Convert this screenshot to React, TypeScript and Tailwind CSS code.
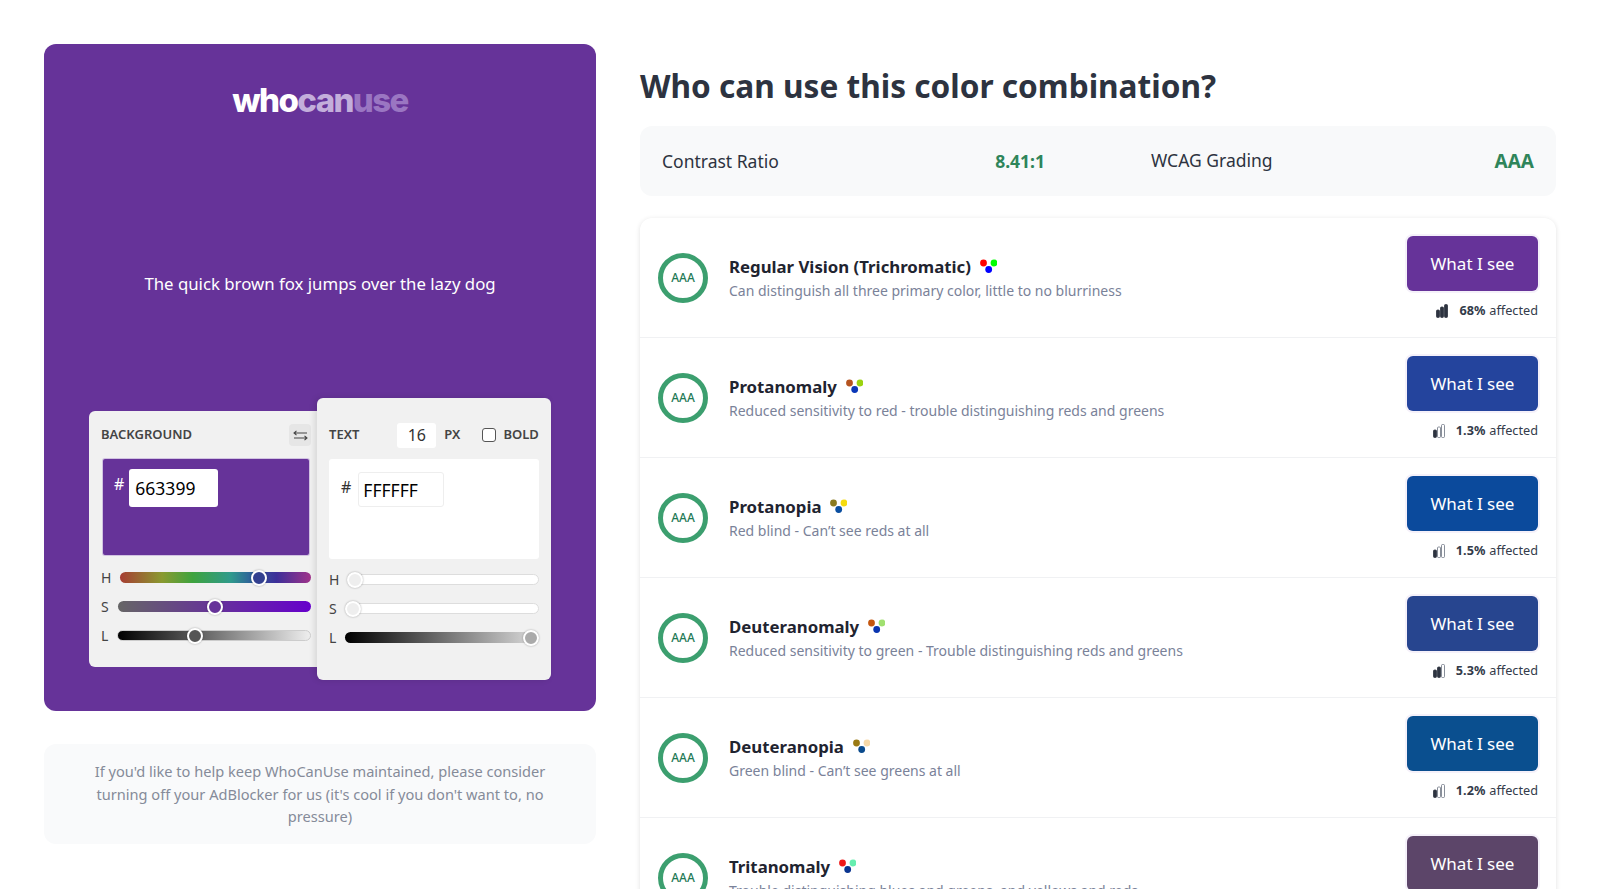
import React from "react";

const rows = [
  { name: "Regular Vision (Trichromatic)", desc: "Can distinguish all three primary color, little to no blurriness", pct: "68%", level: 3, btn: "bg-[#663399]", dots: ["#ff0000", "#00ff00", "#0000ff"] },
  { name: "Protanomaly", desc: "Reduced sensitivity to red - trouble distinguishing reds and greens", pct: "1.3%", level: 1, btn: "bg-[#24449d]", dots: ["#b5531f", "#9bd30f", "#0a37b8"] },
  { name: "Protanopia", desc: "Red blind - Can’t see reds at all", pct: "1.5%", level: 1, btn: "bg-[#0b4a9c]", dots: ["#8a7a20", "#f5dc10", "#0a4ea0"] },
  { name: "Deuteranomaly", desc: "Reduced sensitivity to green - Trouble distinguishing reds and greens", pct: "5.3%", level: 2, btn: "bg-[#27458f]", dots: ["#c4560f", "#a0e070", "#0a35b0"] },
  { name: "Deuteranopia", desc: "Green blind - Can’t see greens at all", pct: "1.2%", level: 1, btn: "bg-[#0a4f8f]", dots: ["#9a7a14", "#f7d9a8", "#0a4a8c"] },
  { name: "Tritanomaly", desc: "Trouble distinguishing blues and greens, and yellows and reds", pct: "0.01%", level: 1, btn: "bg-[#5c4569]", dots: ["#f01818", "#66eeb0", "#0a3590"] },
];

function Dots({ colors }: { colors: string[] }) {
  return (
    <svg width="17" height="17" viewBox="0 0 17 17" className="ml-[9px] shrink-0">
      <circle cx="3.5" cy="4" r="3.4" fill={colors[0]} />
      <circle cx="14" cy="4" r="3.4" fill={colors[1]} />
      <circle cx="8.7" cy="10.5" r="3.4" fill={colors[2]} />
    </svg>
  );
}

function Bars({ level }: { level: number }) {
  const bars = [
    { x: 0.5, y: 6, h: 7.5 },
    { x: 4.5, y: 3, h: 10.5 },
    { x: 8.5, y: 0.5, h: 13 },
  ];
  return (
    <svg width="13" height="14" viewBox="0 0 13 14" className="mr-2.5 shrink-0">
      {bars.map((b, i) => (
        <rect
          key={i}
          x={b.x}
          y={b.y}
          width="3"
          height={b.h}
          rx="1"
          fill={i < level ? "#2d3340" : "#ffffff"}
          stroke={i < level ? "#2d3340" : "#6b7280"}
          strokeWidth="0.8"
        />
      ))}
    </svg>
  );
}

function Slider({ label, track, thumb, color, border }: { label: string; track: string; thumb: number; color: string; border?: string }) {
  return (
    <div className="flex items-center gap-[9px] h-[11px]">
      <span className="text-[14px] leading-none text-[#444]">{label}</span>
      <div className={`relative flex-1 h-[11px] rounded-full ${border ?? ""}`} style={{ background: track }}>
        <span
          className="absolute top-1/2 -translate-x-1/2 -translate-y-1/2 w-4 h-4 rounded-full border-[2.5px] border-white shadow-[0_0_2px_rgba(0,0,0,0.35)]"
          style={{ left: thumb, background: color }}
        />
      </div>
    </div>
  );
}

export default function App() {
  return (
    <div className="h-screen overflow-hidden bg-white flex gap-[44px] p-[44px] text-[#1f2430] font-['Noto_Sans','Open_Sans',sans-serif]">
      <div className="w-[552px] shrink-0 flex flex-col">
        <div className="h-[667px] rounded-xl bg-[#663399] flex flex-col items-center">
          <div className="mt-[35px] h-[42px] flex items-center text-[33px] leading-none font-extrabold tracking-[-1.6px] font-['Inter',sans-serif]">
            <span className="text-white">who</span>
            <span className="text-[#c3aedb]">can</span>
            <span className="text-[#9a76c2]">use</span>
          </div>
          <p className="mt-[151px] text-[16.8px] leading-6 text-white">The quick brown fox jumps over the lazy dog</p>
          <div className="mt-[102px] flex items-center">
            <div className="w-[228px] h-[256px] rounded-l-md bg-[#f1f1f1] px-3 pt-[13px]">
              <div className="flex items-center justify-between h-[22px]">
                <span className="text-[13px] font-semibold text-[#444]">BACKGROUND</span>
                <button className="w-[22px] h-[22px] -mr-1.5 rounded bg-[#e6e6e6] flex items-center justify-center">
                  <svg width="15" height="11" viewBox="0 0 15 11" fill="none" stroke="#444" strokeWidth="1.1">
                    <path d="M1 3h13M3.5 0.8 1 3l2.5 2.2" />
                    <path d="M14 8H1M11.5 5.8 14 8l-2.5 2.2" />
                  </svg>
                </button>
              </div>
              <div className="mt-3 ml-px mr-[-5px] h-[98px] rounded-[3px] bg-[#663399] border border-white/70 pl-[11px] pt-[10px] flex items-start gap-[5px]">
                <span className="text-white text-[16px] leading-[30px]">#</span>
                <input readOnly value="663399" className="w-[89px] h-[38px] rounded-[3px] bg-white pl-[6px] text-[17.5px] text-black outline-none" />
              </div>
              <div className="mt-4 -mr-[6px] flex flex-col gap-[18px]">
                <Slider label="H" thumb={139} color="#33408f" track="linear-gradient(90deg,#a63d33,#8a9a30 22%,#3ea33e 38%,#2f9a8c 58%,#2f5a9c 70%,#3d2f99 82%,#a0338a)" />
                <Slider label="S" thumb={97} color="#663399" track="linear-gradient(90deg,#666,#663399 50%,#6600cc)" />
                <Slider label="L" thumb={77} color="#555" track="linear-gradient(90deg,#000,#666 45%,#eee)" border="border border-[#ccc]" />
              </div>
            </div>
            <div className="w-[234px] h-[282px] rounded-md bg-[#f1f1f1] px-3 pt-6 shadow-[-2px_0_6px_rgba(0,0,0,0.12)]">
              <div className="flex items-center h-[26px]">
                <span className="text-[13px] font-semibold text-[#444]">TEXT</span>
                <input readOnly value="16" className="ml-[38px] w-[39px] h-[25px] rounded-[3px] bg-white text-center text-[16px] text-[#333] outline-none" />
                <span className="ml-2 text-[13px] font-semibold text-[#444]">PX</span>
                <span className="ml-[22px] w-[14px] h-[14px] rounded-[3px] border border-[#555] bg-white" />
                <span className="ml-[7px] text-[13px] font-semibold text-[#444]">BOLD</span>
              </div>
              <div className="mt-[11px] h-[100px] rounded-[3px] bg-white pl-3 pt-[13px] flex items-start gap-[7px]">
                <span className="text-[#333] text-[16px] leading-[30px]">#</span>
                <input readOnly value="FFFFFF" className="w-[86px] h-[35px] rounded-[3px] bg-white border border-[#eee] pl-1 text-[17.5px] text-black outline-none" />
              </div>
              <div className="mt-[15px] flex flex-col gap-[18px]">
                <Slider label="H" thumb={6} color="#eee" track="#ffffff" border="border border-[#ddd]" />
                <Slider label="S" thumb={6} color="#eee" track="#ffffff" border="border border-[#ddd]" />
                <Slider label="L" thumb={186} color="#aaa" track="linear-gradient(90deg,#000,#ddd)" />
              </div>
            </div>
          </div>
        </div>
        <div className="mt-[33px] h-[100px] rounded-xl bg-[#f9fafb] px-10 flex items-center text-center text-[14.6px] leading-[22.5px] text-[#858b99]">
          If you'd like to help keep WhoCanUse maintained, please consider turning off your AdBlocker for us (it's cool if you don't want to, no pressure)
        </div>
      </div>

      <div className="flex-1 min-w-0">
        <h1 className="mt-[17px] text-[31.6px] leading-[50px] font-bold text-[#2d3340]">Who can use this color combination?</h1>
        <div className="mt-[15px] h-[70px] rounded-xl bg-[#f8f9fa] px-[22px] grid grid-cols-[1fr_1fr] items-center text-[17.5px] text-[#2d3340]">
          <div className="flex justify-between pr-[53px]">
            <span>Contrast Ratio</span>
            <span className="font-bold text-[#2f855a]">8.41:1</span>
          </div>
          <div className="flex justify-between pl-[53px]">
            <span>WCAG Grading</span>
            <span className="font-bold text-[19px] text-[#2f855a]">AAA</span>
          </div>
        </div>
        <div className="mt-[22px] rounded-xl bg-white shadow-[0_1px_5px_rgba(0,0,0,0.12)]">
          {rows.map((r) => (
            <div key={r.name} className="h-[120px] border-b border-[#f0f1f3] px-[18px] flex items-start">
              <div className="mt-[35px] w-[50px] h-[50px] rounded-full border-[5px] border-[#3c9f6f] flex items-center justify-center text-[12px] font-medium text-[#1f7a55]">
                AAA
              </div>
              <div className="ml-[21px] mt-[35px] flex-1">
                <div className="flex items-center h-[28px]">
                  <span className="text-[16.8px] font-bold text-[#1f2430]">{r.name}</span>
                  <Dots colors={r.dots} />
                </div>
                <div className="text-[14px] leading-5 text-[#7a8299]">{r.desc}</div>
              </div>
              <div className="mt-[18px] flex flex-col items-end">
                <button className={`w-[131px] h-[55px] rounded-md ring-2 ring-[#f5f1fa] text-[17px] text-white ${r.btn}`}>What I see</button>
                <div className="mt-[10px] flex items-center text-[12.7px] text-[#333b4a]">
                  <Bars level={r.level} />
                  <span className="font-bold mr-1">{r.pct}</span>
                  <span>affected</span>
                </div>
              </div>
            </div>
          ))}
        </div>
      </div>
    </div>
  );
}
